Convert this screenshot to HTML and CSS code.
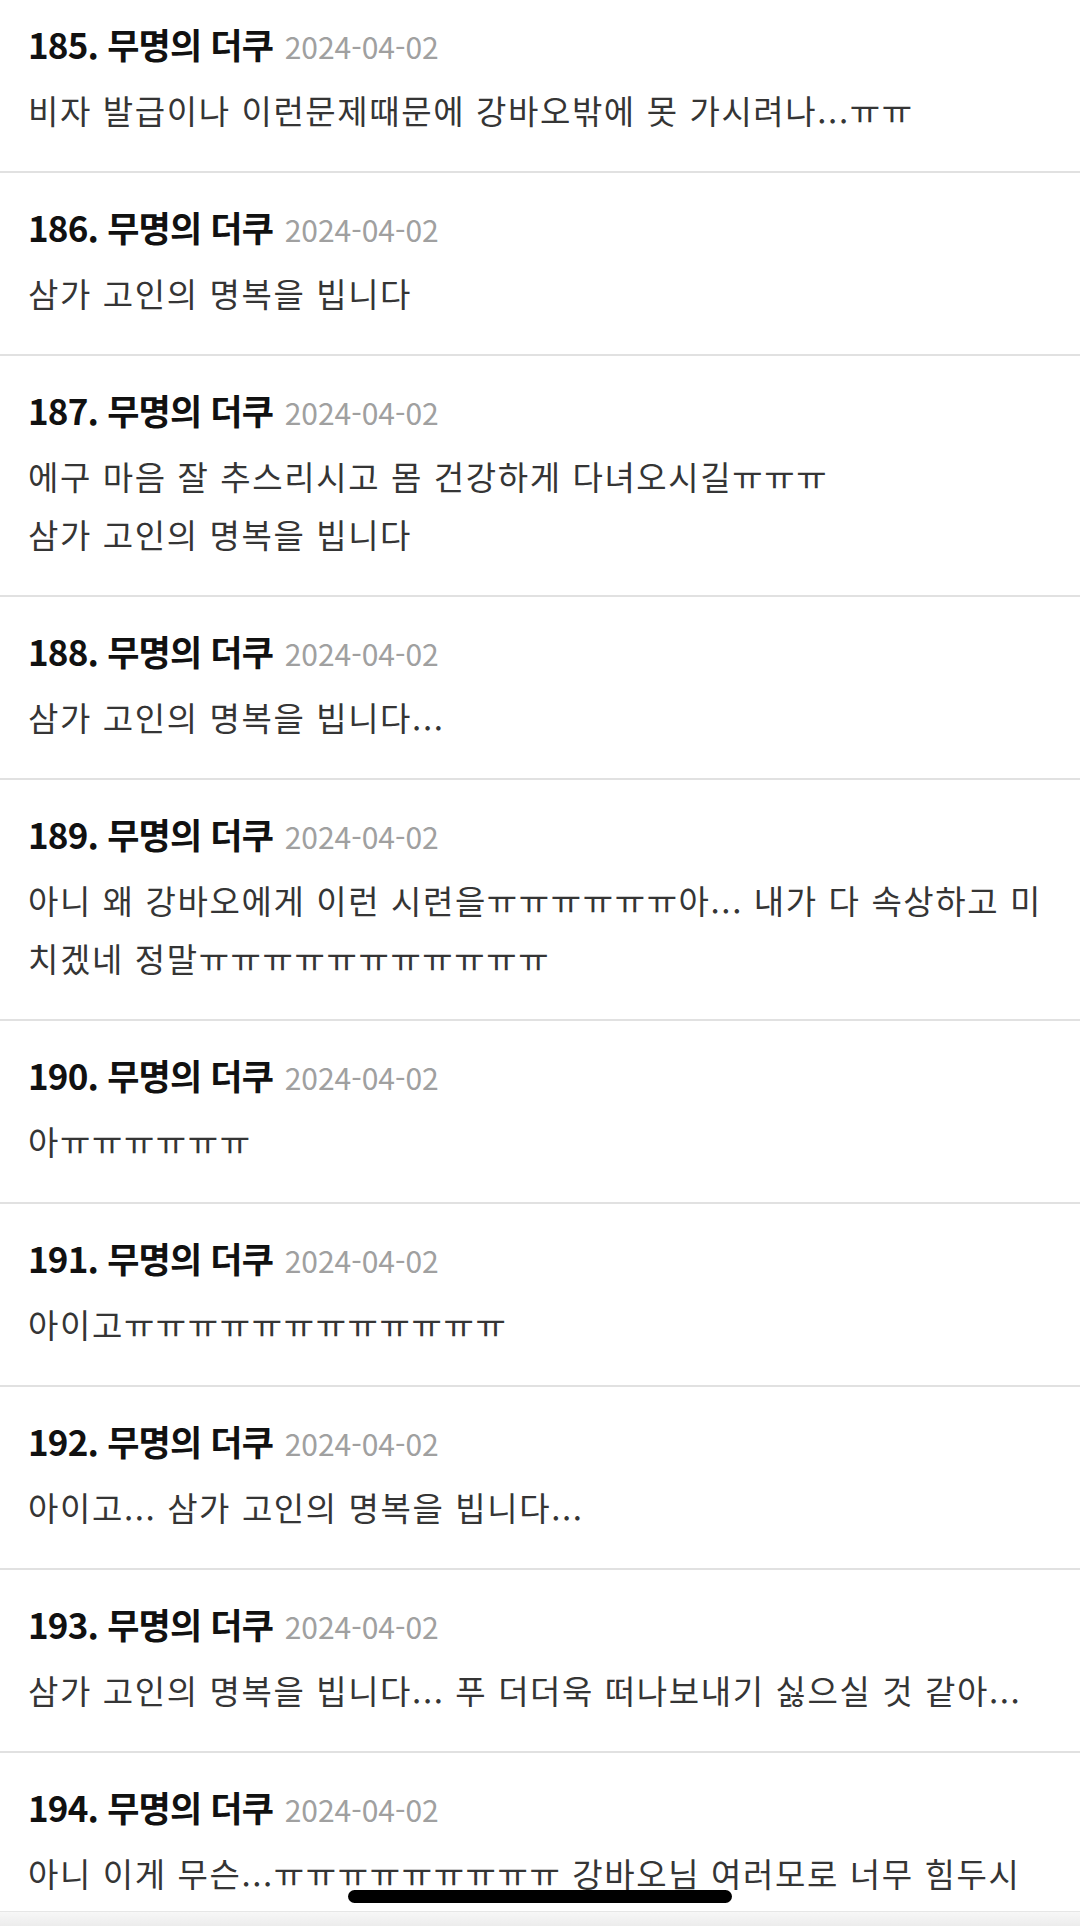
FILE: index.html
```html
<!DOCTYPE html>
<html lang="ko">
  <head>
    <title>댓글</title>
    <meta charset="utf-8" />
    <meta name="viewport" content="width=device-width, initial-scale=1" />
    <link rel="stylesheet" href="styles.css">
  </head>
  <body>
    <!-- comment list -->
    <ul class="comments">
      <li class="comment">
        <div class="comment-head"><span class="comment-author">185. 무명의 더쿠</span> <span class="comment-date">2024-04-02</span></div>
        <p class="comment-body">비자 발급이나 이런문제때문에 강바오밖에 못 가시려나...ㅠㅠ</p>
      </li>
      <li class="comment">
        <div class="comment-head"><span class="comment-author">186. 무명의 더쿠</span> <span class="comment-date">2024-04-02</span></div>
        <p class="comment-body">삼가 고인의 명복을 빕니다</p>
      </li>
      <li class="comment">
        <div class="comment-head"><span class="comment-author">187. 무명의 더쿠</span> <span class="comment-date">2024-04-02</span></div>
        <p class="comment-body">에구 마음 잘 추스리시고 몸 건강하게 다녀오시길ㅠㅠㅠ<br />삼가 고인의 명복을 빕니다</p>
      </li>
      <li class="comment">
        <div class="comment-head"><span class="comment-author">188. 무명의 더쿠</span> <span class="comment-date">2024-04-02</span></div>
        <p class="comment-body">삼가 고인의 명복을 빕니다...</p>
      </li>
      <li class="comment">
        <div class="comment-head"><span class="comment-author">189. 무명의 더쿠</span> <span class="comment-date">2024-04-02</span></div>
        <p class="comment-body">아니 왜 강바오에게 이런 시련을ㅠㅠㅠㅠㅠㅠ아... 내가 다 속상하고 미치겠네 정말ㅠㅠㅠㅠㅠㅠㅠㅠㅠㅠㅠ</p>
      </li>
      <li class="comment">
        <div class="comment-head"><span class="comment-author">190. 무명의 더쿠</span> <span class="comment-date">2024-04-02</span></div>
        <p class="comment-body">아ㅠㅠㅠㅠㅠㅠ</p>
      </li>
      <li class="comment">
        <div class="comment-head"><span class="comment-author">191. 무명의 더쿠</span> <span class="comment-date">2024-04-02</span></div>
        <p class="comment-body">아이고ㅠㅠㅠㅠㅠㅠㅠㅠㅠㅠㅠㅠ</p>
      </li>
      <li class="comment">
        <div class="comment-head"><span class="comment-author">192. 무명의 더쿠</span> <span class="comment-date">2024-04-02</span></div>
        <p class="comment-body">아이고... 삼가 고인의 명복을 빕니다...</p>
      </li>
      <li class="comment">
        <div class="comment-head"><span class="comment-author">193. 무명의 더쿠</span> <span class="comment-date">2024-04-02</span></div>
        <p class="comment-body">삼가 고인의 명복을 빕니다... 푸 더더욱 떠나보내기 싫으실 것 같아...</p>
      </li>
      <li class="comment">
        <div class="comment-head"><span class="comment-author">194. 무명의 더쿠</span> <span class="comment-date">2024-04-02</span></div>
        <p class="comment-body">아니 이게 무슨...ㅠㅠㅠㅠㅠㅠㅠㅠㅠ 강바오님 여러모로 너무 힘두시겠다</p>
      </li>
    </ul>

    <div class="bottom-fade"></div>
    <div class="home-indicator"></div>
  </body>
</html>
```

FILE: styles.css
```css
body {
  margin: 0;
  background: #fff;
  font-family: "Noto Sans CJK KR", "Noto Sans", sans-serif;
  overflow: hidden;
}

.comments {
  list-style: none;
  margin: -10px 0 0 0;
  padding: 0;
}

.comment {
  padding: 31px 35px 32px 28px;
  border-bottom: 2px solid #e1e1e1;
}

.comment-head {
  height: 46px;
  line-height: 46px;
  margin-bottom: 14px;
  white-space: nowrap;
}

.comment-author {
  font-size: 35px;
  font-weight: 700;
  letter-spacing: -0.8px;
  color: #111;
}

.comment-date {
  margin-left: 7px;
  font-size: 30px;
  color: #a0a0a0;
}

.comment-body {
  margin: 0;
  font-size: 33px;
  letter-spacing: 1.6px;
  line-height: 58px;
  color: #353535;
}

/* overlay bits at the bottom of the screen */
.bottom-fade {
  position: fixed;
  left: 0;
  right: 0;
  bottom: 0;
  height: 14px;
  background: linear-gradient(#f7f7f7, #ececec);
  border-top: 1px solid #e6e6e6;
}

.home-indicator {
  position: fixed;
  left: 348px;
  bottom: 23px;
  width: 384px;
  height: 13px;
  border-radius: 7px;
  background: #000;
}
```
